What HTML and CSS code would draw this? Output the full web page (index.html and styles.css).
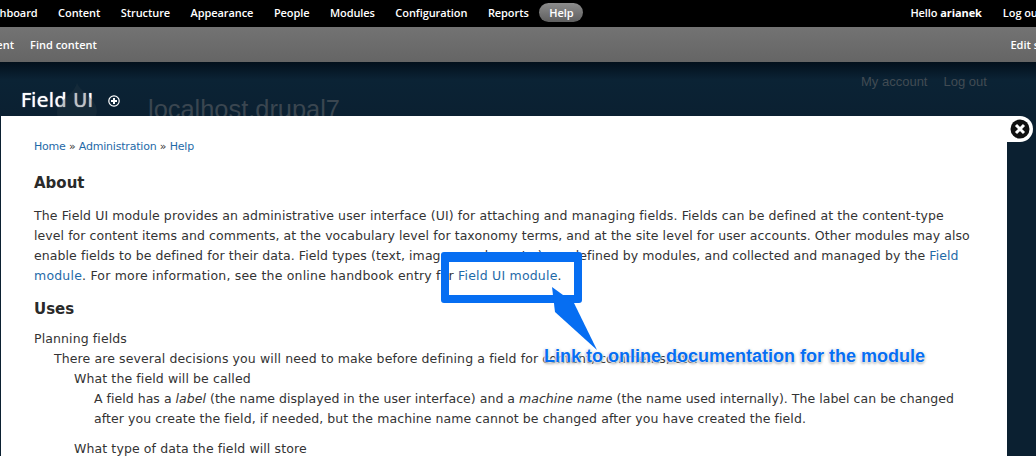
FILE: index.html
```html
<!DOCTYPE html>
<html lang="en">
<head>
<meta charset="utf-8">
<title>Field UI</title>
<link rel="stylesheet" href="styles.css">
</head>
<body>
<div class="page">
  <nav class="toolbar">
    <ul class="menu">
      <li>Dashboard</li><li>Content</li><li>Structure</li><li>Appearance</li><li>People</li><li>Modules</li><li>Configuration</li><li>Reports</li><li class="active">Help</li>
    </ul>
    <div class="user"><span>Hello <b>arianek</b></span><span>Log out</span></div>
  </nav>
  <nav class="shortcuts">
    <div class="links"><span>Add content</span><span>Find content</span></div>
    <span class="edit">Edit shortcuts</span>
  </nav>
  <header class="header">
    <svg class="ghost" width="50" height="36" viewBox="0 0 50 36" aria-hidden="true"><path d="M25 0c2 7 15 13 19 23 2 6 0 11-2 13H7c-3-4-3-12 3-18C17 12 23 7 25 0z" fill="#2b3a47" opacity=".3"/></svg>
    <div class="ghost-site">localhost.drupal7</div>
    <div class="ghost-links"><span>My account</span><span>Log out</span></div>
    <h1 class="title">Field UI <svg class="add" width="12" height="12" viewBox="0 0 12 12" aria-hidden="true"><circle cx="6" cy="6" r="5.2" fill="#0b2234" stroke="#fff" stroke-width="1.2"/><path d="M6 3v6M3 6h6" stroke="#fff" stroke-width="2"/></svg></h1>
  </header>
  <main class="overlay">
    <div class="crumbs"><a>Home</a> » <a>Administration</a> » <a>Help</a></div>
    <h2 class="h-about">About</h2>
    <p class="about">The Field UI module provides an administrative user interface (UI) for attaching and managing fields. Fields can be defined at the content-type<br><span class="tight">level for content items and comments, at the vocabulary level for taxonomy terms, and at the site level for user accounts. Other modules may also</span><br><span class="snug">enable fields to be defined for their data. Field types (text, image, number, etc.) are defined by modules, and collected and managed by the <a>Field</a></span><br><span class="loose"><a>module</a>. For more information, see the online handbook entry for <a>Field UI module</a>.</span></p>
    <h2 class="h-uses">Uses</h2>
    <dl class="uses">
      <dt>Planning fields</dt>
      <dd>There are several decisions you will need to make before defining a field for content, comments, etc.
        <dl>
          <dt>What the field will be called</dt>
          <dd><span class="narrow">A field has a <em>label</em> (the name displayed in the user interface) and a <em>machine name</em> (the name used internally). The label can be changed</span><br><span class="snug">after you create the field, if needed, but the machine name cannot be changed after you have created the field.</span></dd>
          <dt>What type of data the field will store</dt>
        </dl>
      </dd>
    </dl>
  </main>
  <div class="close-tab"><svg width="20" height="20" viewBox="0 0 20 20" aria-hidden="true"><circle cx="10" cy="10" r="9.5" fill="#111"/><path d="M6 6l8 8M14 6l-8 8" stroke="#fff" stroke-width="3"/></svg></div>
  <div class="callout-box"></div>
  <svg class="callout-arrow" width="50" height="66" viewBox="0 0 50 66" aria-hidden="true"><path d="M2 1L24 17 47 64 5 26z" fill="#066ef2"/></svg>
  <div class="callout-text">Link to online documentation for the module</div>
</div>
</body>
</html>
```
FILE: styles.css
```css
html, body { margin: 0; padding: 0; background: #0b2031; }
.page { position: relative; width: 1036px; height: 456px; overflow: hidden; font-family: "DejaVu Sans", "Open Sans", sans-serif; }
.toolbar { box-sizing: border-box; height: 27px; padding-bottom: 3px; background: #000; color: #fff; display: flex; justify-content: space-between; align-items: center; font-family: "Open Sans", sans-serif; font-size: 11px; font-weight: 600; letter-spacing: -.08px; white-space: nowrap; }
.menu { display: flex; align-items: center; gap: 20.5px; list-style: none; margin: 0 0 0 -20px; padding: 0; }
.menu .active { background: linear-gradient(#8c8c8c, #5f5f5f); border-radius: 10px; padding: 2px 10px; margin-left: -10px; }
.user { display: flex; gap: 21px; margin-right: -6px; }
.user b { font-weight: 700; }
.shortcuts { box-sizing: border-box; height: 35px; padding-bottom: 1px; background: linear-gradient(#737373, #656565); color: #fff; display: flex; justify-content: space-between; align-items: center; font-family: "Open Sans", sans-serif; font-size: 11px; font-weight: 600; white-space: nowrap; }
.links { display: flex; gap: 16px; margin-left: -51px; }
.edit { margin-right: -48px; }
.header { position: relative; height: 54px; background: linear-gradient(#02101c, #0b2335 18px, #0b2031); overflow: hidden; }
.ghost { position: absolute; left: 52px; top: 21px; }
.ghost-site { position: absolute; left: 148px; top: 33px; font: 25.4px "Liberation Sans", sans-serif; color: #3a4650; }
.ghost-links { position: absolute; left: 861px; top: 12px; display: flex; gap: 16px; font: 13px "Liberation Sans", sans-serif; color: #414b53; }
.title { margin: 26px 0 0 21px; font-size: 19px; line-height: 24px; font-weight: 400; letter-spacing: .4px; color: #fff; text-shadow: 0 0 1px #fff; }
.add { margin-left: 8px; vertical-align: 0; }
.overlay { margin-left: 1px; width: 973px; padding: 21px 0 0 33px; height: 319px; background: #fff; color: #333; font-size: 12.5px; line-height: 20px; white-space: nowrap; letter-spacing: .11px; }
.overlay a { color: #1f6aa8; }
.tight { letter-spacing: .075px; }
.snug { letter-spacing: .08px; }
.narrow { letter-spacing: .03px; }
.loose { letter-spacing: .2px; }
.crumbs { font-size: 11px; line-height: 20px; letter-spacing: -.2px; }
.overlay h2 { margin: 0; font-size: 15px; font-weight: 700; line-height: 20px; letter-spacing: 0; color: #2a2a2a; }
.h-about { padding-top: 16px; }
.about { margin: 13px 0 0; }
.h-uses { padding-top: 13px; }
.uses { margin: 10px 0 0; }
.overlay dl { margin-bottom: 0; }
.overlay dd { margin-left: 20px; }
.overlay dd > dl { margin: 0 0 0 20px; }
.overlay dd dd { margin-bottom: 10px; }
.close-tab { position: absolute; left: 1007px; top: 116px; width: 26px; height: 26px; background: #fff; border-radius: 0 13px 13px 0; display: flex; align-items: center; justify-content: center; }
.callout-box { position: absolute; left: 441px; top: 252px; width: 125px; height: 33px; border: 8px solid #066ef2; border-top-width: 10px; border-radius: 3px; }
.callout-arrow { position: absolute; left: 550px; top: 286px; }
.callout-text { position: absolute; left: 544px; top: 345px; font: 700 18px/22px "Liberation Sans", sans-serif; color: #066ef2; white-space: nowrap; text-shadow: 0 0 2px #fff, 0 0 2px #fff, 0 0 3px #fff, 0 1px 3px #555; }
```
